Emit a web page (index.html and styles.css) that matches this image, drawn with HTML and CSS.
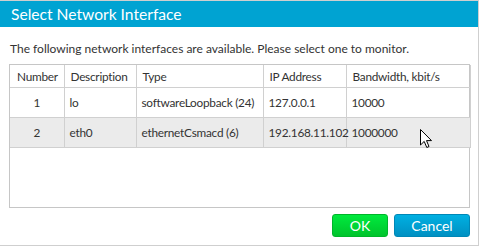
FILE: index.html
```html
<!DOCTYPE html>
<html>

<head>
    <title>Select Network Interface</title>
    <link rel="stylesheet" href="styles.css">
</head>

<body>
    <div class="dialog">
        <div class="dialog-title">Select Network Interface</div>
        <div class="dialog-body">
            <p class="hint">The following network interfaces are available. Please select one to monitor.</p>
            <div class="grid-box">
                <table class="iface-table">
                    <colgroup>
                        <col class="col-num">
                        <col class="col-desc">
                        <col class="col-type">
                        <col class="col-ip">
                        <col class="col-bw">
                    </colgroup>
                    <thead>
                        <tr>
                            <th>Number</th>
                            <th>Description</th>
                            <th>Type</th>
                            <th>IP Address</th>
                            <th>Bandwidth, kbit/s</th>
                        </tr>
                    </thead>
                    <tbody>
                        <tr>
                            <td class="num">1</td>
                            <td>lo</td>
                            <td>softwareLoopback (24)</td>
                            <td>127.0.0.1</td>
                            <td>10000</td>
                        </tr>
                        <tr class="hover">
                            <td class="num">2</td>
                            <td>eth0</td>
                            <td>ethernetCsmacd (6)</td>
                            <td>192.168.11.102</td>
                            <td>1000000</td>
                        </tr>
                    </tbody>
                </table>
                <!-- mouse pointer -->
                <svg class="cursor" width="13" height="20" viewBox="0 0 13 20">
                    <path d="M0.5 0.5 L0.5 16 L4.2 12.4 L6.8 18.5 L9 17.5 L6.5 11.6 L11.5 11.6 Z" fill="#fff" stroke="#000" stroke-width="1" stroke-linejoin="miter"/>
                </svg>
            </div>
            <div class="actions">
                <button class="btn btn-ok">OK</button>
                <button class="btn btn-cancel">Cancel</button>
            </div>
        </div>
    </div>
</body>

</html>
```

FILE: styles.css
```css
body {
    margin: 0;
    font-family: Lato, "Noto Sans", sans-serif;
    color: #333;
    background: #fff;
}

.dialog {
    width: 478px;
    height: 244px;
    border-top: 1px solid #cfcfcf;
    border-right: 1px solid #cfcfcf;
    border-bottom: 1px solid #cfcfcf;
    display: flex;
    flex-direction: column;
}

.dialog-title {
    height: 26px;
    background: #00a3d2;
    color: #fff;
    font-size: 15.6px;
    line-height: 26px;
    padding-left: 11px;
}

.dialog-body {
    padding: 0 8px 0 9px;
}

.hint {
    margin: 13px 0 0 1px;
    font-size: 12px;
    line-height: 17px;
    white-space: nowrap;
}

.grid-box {
    position: relative;
    margin-top: 7px;
    height: 142px;
    border: 1px solid #c6c6c6;
}

.iface-table {
    border-collapse: collapse;
    table-layout: fixed;
    font-size: 11.8px;
    letter-spacing: -0.25px;
    width: 460px;
    white-space: nowrap;
}

.col-num { width: 54px; }
.col-desc { width: 72px; }
.col-type { width: 127px; }
.col-ip { width: 83px; }
.col-bw { width: 124px; }

.iface-table th {
    font-weight: normal;
    text-align: left;
    height: 22px;
    padding: 0 0 0 6px;
    border-right: 1px solid #d0d0d0;
    border-bottom: 1px solid #d0d0d0;
}

.iface-table td {
    height: 29px;
    padding: 0 0 0 5px;
    border-right: 1px solid #d0d0d0;
    border-bottom: 1px solid #d0d0d0;
}

.iface-table th:first-child {
    padding-left: 7px;
}

.iface-table td.num {
    text-align: center;
    padding: 0;
}

.iface-table tr.hover td {
    background: #ebebeb;
}

.cursor {
    position: absolute;
    left: 410px;
    top: 64px;
}

.actions {
    display: flex;
    justify-content: flex-end;
    gap: 6px;
    margin-top: 6px;
}

.btn {
    height: 23px;
    border-radius: 3px;
    color: #fff;
    font-family: Lato, sans-serif;
    font-size: 14px;
    padding: 0;
    cursor: pointer;
}

.btn-ok {
    width: 56px;
    background: linear-gradient(#00ea3e, #00c42c);
    border: 1px solid #00b52a;
}

.btn-cancel {
    width: 76px;
    background: linear-gradient(#00b0e2, #0090c2);
    border: 1px solid #0087b6;
}
```
